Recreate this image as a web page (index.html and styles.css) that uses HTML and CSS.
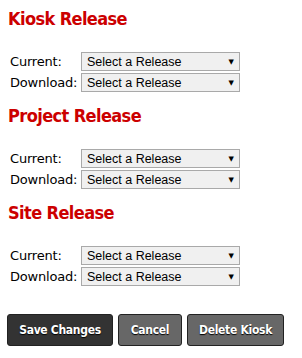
FILE: index.html
```html
<!DOCTYPE html>
<html>
<head>
<meta charset="utf-8">
<link rel="stylesheet" href="styles.css">
</head>
<body>
<div class="page">
  <section class="section">
    <h2 class="title">Kiosk Release</h2>
    <div class="rows">
      <label class="label">Current:</label>
      <div class="select"><span>Select a Release</span><span class="arrow">&#9660;</span></div>
      <label class="label">Download:</label>
      <div class="select"><span>Select a Release</span><span class="arrow">&#9660;</span></div>
    </div>
  </section>
  <section class="section">
    <h2 class="title">Project Release</h2>
    <div class="rows">
      <label class="label">Current:</label>
      <div class="select"><span>Select a Release</span><span class="arrow">&#9660;</span></div>
      <label class="label">Download:</label>
      <div class="select"><span>Select a Release</span><span class="arrow">&#9660;</span></div>
    </div>
  </section>
  <section class="section">
    <h2 class="title">Site Release</h2>
    <div class="rows">
      <label class="label">Current:</label>
      <div class="select"><span>Select a Release</span><span class="arrow">&#9660;</span></div>
      <label class="label">Download:</label>
      <div class="select"><span>Select a Release</span><span class="arrow">&#9660;</span></div>
    </div>
  </section>
  <div class="buttons">
    <button class="btn btn-dark btn-save">Save Changes</button>
    <button class="btn btn-cancel">Cancel</button>
    <button class="btn btn-delete">Delete Kiosk</button>
  </div>
</div>
</body>
</html>
```
FILE: styles.css
```css
html, body {
  margin: 0;
  padding: 0;
  background: #fff;
}
.page {
  padding: 8px 0 0 8px;
  font-family: "DejaVu Sans", sans-serif;
}
.section {
  display: flex;
  flex-direction: column;
  margin-bottom: 13px;
}
.title {
  margin: 0;
  font-family: "DejaVu Sans Condensed", "DejaVu Sans", sans-serif;
  font-stretch: condensed;
  font-size: 18px;
  line-height: 22px;
  font-weight: bold;
  color: #cc0000;
  letter-spacing: -0.6px;
}
.rows {
  margin-top: 22px;
  display: grid;
  grid-template-columns: 73px 159px;
  row-gap: 2px;
  align-items: center;
}
.label {
  font-size: 13px;
  color: #000;
  padding-left: 2px;
  letter-spacing: -0.2px;
}
.select {
  box-sizing: border-box;
  height: 19px;
  width: 159px;
  border: 1px solid #a9a9a9;
  background: #f0f0f0;
  display: flex;
  align-items: center;
  justify-content: space-between;
  padding: 0 5px 0 5px;
  font-family: "Liberation Sans", Arial, sans-serif;
  font-size: 12.5px;
  color: #000;
}
.arrow {
  font-size: 7px;
  font-family: "DejaVu Sans", sans-serif;
}
.buttons {
  display: flex;
  gap: 5px;
  margin-top: 28px;
  margin-left: -1px;
}
.btn {
  box-sizing: border-box;
  height: 32px;
  padding: 0;
  border: 1px solid #222;
  border-radius: 3px;
  background: #676767;
  color: #fff;
  font-family: "DejaVu Sans Condensed", "DejaVu Sans", sans-serif;
  font-stretch: condensed;
  font-weight: bold;
  font-size: 12px;
  letter-spacing: -0.3px;
  white-space: nowrap;
  text-shadow: 0 1px 1px #000;
}
.btn-dark {
  background: #333;
}
.btn-save { width: 106px; }
.btn-cancel { width: 64px; }
.btn-delete { width: 97px; }
```
